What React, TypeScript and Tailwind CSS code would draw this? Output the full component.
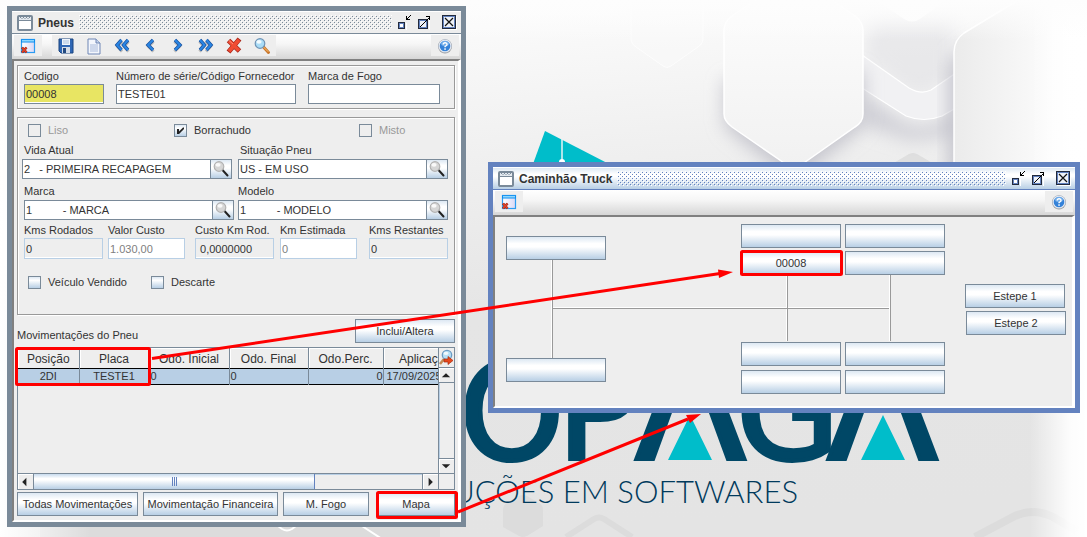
import * as React from "react";
import clsx from "clsx";

const metalButton =
  "border border-[#7a8a99] bg-[linear-gradient(#dde8f3,#ffffff_30%,#ffffff_45%,#b8cfe5)] text-[#333] text-[11px] leading-3 whitespace-nowrap";

function FrameIcon() {
  return (
    <svg width="16" height="16" viewBox="0 0 16 16" className="shrink-0" aria-hidden="true">
      <rect x="1" y="1" width="14" height="14" rx="1" fill="#fff" stroke="#7a8a99" strokeWidth="2" />
      <rect x="2" y="2" width="12" height="3" fill="#e4e9ef" />
      <path d="M3 2.500h1M6 2.500h1M9 2.500h1M12 2.500h1M4.500 3.500h1M7.500 3.500h1M10.500 3.500h1" stroke="#7a8a99" />
      <path d="M2 5.500h12" stroke="#7a8a99" />
    </svg>
  );
}

function Bumps({ id, color }: { id: string; color: string }) {
  return (
    <svg className="h-[15px] min-w-0 flex-1" shapeRendering="crispEdges" aria-hidden="true">
      <defs>
        <pattern id={id} width="4" height="4" patternUnits="userSpaceOnUse">
          <rect x="0" y="0" width="1" height="1" fill="#fff" />
          <rect x="1" y="1" width="1" height="1" fill={color} />
          <rect x="2" y="2" width="1" height="1" fill="#fff" />
          <rect x="3" y="3" width="1" height="1" fill={color} />
        </pattern>
      </defs>
      <rect width="100%" height="100%" fill={`url(#${id})`} />
    </svg>
  );
}

function MinimizeIcon() {
  return (
    <svg width="15" height="15" viewBox="0 0 15 15" shapeRendering="crispEdges" aria-hidden="true">
      <path d="M2 15h7V8" fill="none" stroke="#fff" />
      <rect x="1.500" y="7.500" width="6" height="6" fill="#fff" stroke="#222a3c" />
      <rect x="2.500" y="8.500" width="4" height="4" fill="none" stroke="#6382bf" />
      <path d="M9 1h1v3h3v1H9zM10 3h1v1h-1zM11 2h1v1h-1zM12 1h1v1h-1zM13 0h1v1h-1z" fill="#000" />
    </svg>
  );
}

function MaximizeIcon() {
  return (
    <svg width="15" height="15" viewBox="0 0 15 15" shapeRendering="crispEdges" aria-hidden="true">
      <path d="M2 15h10V5" fill="none" stroke="#fff" />
      <rect x="1.500" y="4.500" width="9" height="9" fill="#eef2f8" stroke="#222a3c" />
      <rect x="2.500" y="5.500" width="7" height="7" fill="none" stroke="#6382bf" />
      <path
        d="M3 11h1v1H3zM4 10h1v1H4zM5 9h1v1H5zM6 8h1v1H6zM7 7h1v1H7zM8 6h1v1H8zM9 5h1v1H9zM10 4h1v1h-1zM11 3h1v1h-1zM9 1h4v4h-1V2H9z"
        fill="#000"
      />
    </svg>
  );
}

function CloseIcon() {
  return (
    <svg width="15" height="15" viewBox="0 0 15 15" aria-hidden="true">
      <rect x="1.500" y="1.500" width="13" height="13" fill="none" stroke="#fff" />
      <rect x=".5" y=".5" width="13" height="13" fill="#eef2f8" stroke="#222a3c" />
      <rect x="1.500" y="1.500" width="11" height="11" fill="none" stroke="#6382bf" />
      <path d="M3 3l8 8M11 3l-8 8" stroke="#111" strokeWidth="1.200" />
    </svg>
  );
}

function ExitIcon() {
  return (
    <svg width="16" height="16" viewBox="0 0 16 16" aria-hidden="true">
      <defs>
        <linearGradient id="exitFill" x1="0" x2="1">
          <stop offset="0" stopColor="#fff" />
          <stop offset="1" stopColor="#d9d8f5" />
        </linearGradient>
      </defs>
      <rect x="1.500" y="1.500" width="13" height="13" fill="url(#exitFill)" stroke="#2b9cf2" strokeWidth="1.200" />
      <path d="M1 3h14" stroke="#0a8cf0" strokeWidth="3" />
      <path d="M2 2.800h12" stroke="#9fe0ff" strokeWidth="1.400" />
      <path d="M2 9.500l4.500 5M6.500 9.500l-4.500 5" stroke="#7c1d10" strokeWidth="2.600" />
      <path d="M2 9.500l4.500 5M6.500 9.500l-4.500 5" stroke="#e0432b" strokeWidth="1.700" />
    </svg>
  );
}

function SaveIcon() {
  return (
    <svg width="18" height="18" viewBox="0 0 18 18" aria-hidden="true">
      <path d="M2 2h14v14H4l-2-2z" fill="#2f67b5" stroke="#1b447f" />
      <rect x="5" y="2" width="8" height="6" fill="#eef4fb" />
      <path d="M6 4h6M6 6h6" stroke="#a9c0dc" />
      <rect x="5" y="10" width="8" height="6" fill="#d5dde8" />
      <rect x="6" y="11" width="3" height="5" fill="#234a80" />
    </svg>
  );
}

function PageIcon() {
  return (
    <svg width="18" height="18" viewBox="0 0 18 18" aria-hidden="true">
      <path d="M3 2h8l4 4v11H3z" fill="#f3f6fc" stroke="#6f86b5" />
      <path d="M11 2v4h4" fill="#c6d3ea" stroke="#6f86b5" />
      <path d="M5 8h8M5 10h8M5 12h8M5 14h8" stroke="#a9badb" />
    </svg>
  );
}

function ChevronsIcon({ double, right }: { double?: boolean; right?: boolean }) {
  const paths = double ? ["M8.500 3L4 8L8.500 13", "M15 3L10.500 8L15 13"] : ["M12 3L7 8L12 13"];

  return (
    <svg width="18" height="18" viewBox="0 0 18 18" aria-hidden="true">
      <g transform={right ? "translate(18 0) scale(-1 1)" : undefined} fill="none">
        {paths.map((d) => (
          <g key={d}>
            <path d={d} stroke="#888" strokeWidth="3" strokeOpacity=".5" transform="translate(.5 1.500)" />
            <path d={d} stroke="#174f9c" strokeWidth="3.400" />
            <path d={d} stroke="#2a86e4" strokeWidth="2" />
          </g>
        ))}
      </g>
    </svg>
  );
}

function DeleteIcon() {
  return (
    <svg width="18" height="18" viewBox="0 0 18 18" aria-hidden="true">
      <path d="M3.500 3.500L14.500 14M14.500 2L3.500 15" stroke="#a8281b" strokeWidth="5" />
      <path d="M4 4L14 13.500M14 2.800L4 14.300" stroke="#f04c33" strokeWidth="3.600" />
      <path d="M4 3.500L8 7" stroke="#ff8f78" />
    </svg>
  );
}

function SearchIcon({ gray }: { gray?: boolean }) {
  return (
    <svg width="18" height="18" viewBox="0 0 18 18" aria-hidden="true">
      <path d="M10.500 10l5 5.500" stroke={gray ? "#222" : "#c9762b"} strokeWidth={gray ? 2 : 3} strokeLinecap="round" />
      {!gray && <path d="M10.500 10l4.500 4.500" stroke="#ffc470" strokeLinecap="round" />}
      <circle cx="7" cy="6.500" r="4.800" fill={gray ? "#d6d6d6" : "#a9dcf6"} stroke={gray ? "#b2b2b2" : "#6f93b5"} strokeWidth="1.200" />
      <ellipse cx="6" cy="4.800" rx="2.600" ry="1.900" fill="#fff" fillOpacity=".85" />
    </svg>
  );
}

function HelpIcon() {
  return (
    <svg width="16" height="16" viewBox="0 0 16 16" aria-hidden="true">
      <circle cx="8" cy="8.500" r="6.900" fill="#9a9a9a" />
      <circle cx="8" cy="8" r="6.600" fill="#e9eef5" stroke="#a9b4c2" strokeWidth=".6" />
      <circle cx="8" cy="8" r="5.300" fill="#3582d8" />
      <ellipse cx="8" cy="5.600" rx="4" ry="2.600" fill="#8cc0f3" fillOpacity=".7" />
      <path d="M6.200 6.600q0-1.800 1.900-1.800t1.900 1.600q0 1-1.900 2v.8" fill="none" stroke="#fff" strokeWidth="1.400" />
      <rect x="7.300" y="10.300" width="1.500" height="1.500" fill="#fff" />
    </svg>
  );
}

function FindColumnIcon() {
  return (
    <svg width="15" height="18" viewBox="0 0 15 18" aria-hidden="true">
      <path d="M5 10l-4 5" stroke="#c58a55" strokeWidth="2.500" />
      <circle cx="8" cy="6" r="4.700" fill="#b6dff5" stroke="#6c9cc4" strokeWidth="1.300" />
      <ellipse cx="7" cy="4.300" rx="2.500" ry="1.600" fill="#fff" fillOpacity=".8" />
      <path d="M5 10h4V7.500l5 4-5 4V13H5z" fill="#e8481c" stroke="#a52b10" strokeWidth=".7" />
    </svg>
  );
}

const arrowPaths = {
  left: "M9 4v9L4.500 8.500z",
  right: "M6 4v9l4.500-4.500z",
  up: "M3 10h9L7.500 5.500z",
  down: "M3 5.500h9L7.500 10z",
};

function ScrollButton({ dir, label, className }: { dir: keyof typeof arrowPaths; label: string; className?: string }) {
  return (
    <button aria-label={label} className={clsx("h-[15px] w-[15px] shrink-0 bg-[#eee] shadow-[inset_1px_1px_0_#fff]", className)}>
      <svg width="14" height="15" viewBox="0 0 15 16" aria-hidden="true">
        <path d={arrowPaths[dir]} fill="#222" />
      </svg>
    </button>
  );
}

const toolbarItems = [
  { label: "Salvar", icon: <SaveIcon /> },
  { label: "Novo", icon: <PageIcon /> },
  { label: "Primeiro", icon: <ChevronsIcon double /> },
  { label: "Anterior", icon: <ChevronsIcon /> },
  { label: "Próximo", icon: <ChevronsIcon right /> },
  { label: "Último", icon: <ChevronsIcon double right /> },
  { label: "Excluir", icon: <DeleteIcon /> },
  { label: "Pesquisar", icon: <SearchIcon /> },
];

function ToolButton({ label, children }: { label: string; children: React.ReactNode }) {
  return (
    <button aria-label={label} className="flex h-[21px] w-7 items-center justify-center bg-[#eee]">
      {children}
    </button>
  );
}

type FrameProps = {
  id: string;
  title: string;
  active?: boolean;
  className?: string;
  tools?: React.ReactNode;
  children: React.ReactNode;
};

function InternalFrame({ id, title, active, className, tools, children }: FrameProps) {
  return (
    <section
      aria-labelledby={`${id}-title`}
      className={clsx("absolute border-[5px] bg-[#eee]", active ? "border-[#6382bf]" : "border-[#7a8a99]", className)}
    >
      <header
        className={clsx(
          "flex h-[23px] items-center gap-[5px] border-t border-b border-t-white px-1 pl-[5px]",
          active ? "border-b-[#6382bf] bg-[linear-gradient(#dde8f3,#ffffff_30%,#ffffff_40%,#b8cfe5)]" : "border-b-[#7a8a99]"
        )}
      >
        <FrameIcon />
        <h2 id={`${id}-title`} className="text-xs font-bold text-[#333]">
          {title}
        </h2>
        <Bumps id={`${id}-bumps`} color={active ? "#6382bf" : "#7a8a99"} />
        <div className="flex items-center gap-[5px]">
          <button aria-label="Minimizar">
            <MinimizeIcon />
          </button>
          <button aria-label="Maximizar">
            <MaximizeIcon />
          </button>
          <button aria-label="Fechar" className="ml-[5px]">
            <CloseIcon />
          </button>
        </div>
      </header>
      <div className="flex h-[25px] gap-[10px] bg-[linear-gradient(#ffffff,#f6f6f6_40%,#d6d6d6)] px-0.5 pt-px">
        <ToolButton label="Sair">
          <ExitIcon />
        </ToolButton>
        <div className="flex">{tools}</div>
        <div className="ml-auto">
          <ToolButton label="Ajuda">
            <HelpIcon />
          </ToolButton>
        </div>
      </div>
      <div className="border-t-2 border-r-[3px] border-b-2 border-l-2 border-t-[#808080] border-r-white border-b-white border-l-[#808080]">
        {children}
      </div>
    </section>
  );
}

function Panel({ className, children }: { className?: string; children: React.ReactNode }) {
  return (
    <div className={clsx("border border-[#999] shadow-[inset_1px_1px_0_#fff,1px_1px_0_#fff]", className)}>{children}</div>
  );
}

type FieldProps = {
  id: string;
  label: string;
  value: string;
  className?: string;
  inputClass?: string;
};

function Field({ id, label, value, className, inputClass = "h-5 border-[#7a8a99] bg-white text-[#333]" }: FieldProps) {
  return (
    <div className={clsx("flex flex-col gap-0.5", className)}>
      <label htmlFor={id} className="leading-3 whitespace-nowrap">
        {label}
      </label>
      <input id={id} defaultValue={value} className={clsx("w-full border px-px shadow-[inset_0_-1px_0_#fff]", inputClass)} />
    </div>
  );
}

function Lookup({ id, label, value, labelClass }: { id: string; label: string; value: string; labelClass?: string }) {
  return (
    <div className="flex w-[210px] flex-col gap-[3px]">
      <label htmlFor={id} className={clsx("leading-3", labelClass)}>
        {label}
      </label>
      <div className="flex">
        <input id={id} defaultValue={value} className="h-5 min-w-0 flex-1 border border-r-0 border-[#7a8a99] bg-white px-px" />
        <button aria-label={`Pesquisar ${label}`} className={clsx(metalButton, "flex h-5 w-[22px] items-center justify-center")}>
          <SearchIcon gray />
        </button>
      </div>
    </div>
  );
}

function Check({ id, label, checked, disabled }: { id: string; label: string; checked?: boolean; disabled?: boolean }) {
  return (
    <div className={clsx("flex items-center gap-[7px] leading-[13px]", disabled && "text-[#999]")}>
      <span className="relative block h-[13px] w-[13px]">
        <input
          id={id}
          type="checkbox"
          defaultChecked={checked}
          disabled={disabled}
          className={clsx(
            "block h-[13px] w-[13px] appearance-none border border-[#7a8a99]",
            disabled ? "bg-[#eee]" : "bg-[linear-gradient(#dde8f3,#ffffff_30%,#b8cfe5)]"
          )}
        />
        {checked && (
          <svg className="pointer-events-none absolute inset-0" width="13" height="13" viewBox="0 0 13 13" aria-hidden="true">
            <path d="M3 5h2v2.500L9 3.500h1V5l-5 5H3z" fill="#222" />
          </svg>
        )}
      </span>
      <label htmlFor={id}>{label}</label>
    </div>
  );
}

const readOnlyInput = "h-[21px] border-[#b8cfe5] bg-[#eee] text-[#333]";
const mutedInput = "h-[21px] border-[#b8cfe5] bg-white text-[#808080]";

const kmFields = [
  { id: "kmsRodados", label: "Kms Rodados", value: "0", className: "w-[79px]", inputClass: readOnlyInput },
  { id: "valorCusto", label: "Valor Custo", value: "1.030,00", className: "w-[77px]", inputClass: mutedInput },
  { id: "custoKm", label: "Custo Km Rod.", value: " 0,0000000", className: "w-[79px]", inputClass: readOnlyInput },
  { id: "kmEstimada", label: "Km Estimada", value: "0", className: "w-[77px]", inputClass: mutedInput },
  { id: "kmsRestantes", label: "Kms Restantes", value: "0", className: "w-[79px]", inputClass: readOnlyInput },
];

const columns = [
  { title: "Posição", value: "2DI", width: "w-[61px]", align: "text-center" },
  { title: "Placa", value: "TESTE1", width: "w-[70px]", align: "text-center" },
  { title: "Odo. Inicial", value: "0", width: "w-[80px]", align: "pl-px text-left" },
  { title: "Odo. Final", value: "0", width: "w-[79px]", align: "pl-px text-left" },
  { title: "Odo.Perc.", value: "0", width: "w-[75px]", align: "text-right" },
  { title: "Aplicação", value: "17/09/2025", width: "w-[84px]", align: "pl-[3px] text-left" },
];

function MovementsTable() {
  return (
    <div className="mt-1 border border-[#7a8a99]">
      <div className="flex">
        <div className="h-[125px] min-w-0 flex-1 overflow-hidden">
          <table className="w-[449px] table-fixed border-collapse">
            <thead>
              <tr className="h-5">
                {columns.map((col) => (
                  <th
                    key={col.title}
                    className={clsx(
                      "border-r border-[#7a8a99] p-0 pt-0.5 text-xs leading-4 font-normal shadow-[inset_1px_1px_0_#fff]",
                      col.width
                    )}
                  >
                    {col.title}
                  </th>
                ))}
              </tr>
            </thead>
            <tbody>
              <tr className="h-4 border-y border-black bg-[#b8cfe5]">
                {columns.map((col) => (
                  <td key={col.title} className={clsx("border-r border-r-[#7a8a99] p-0 leading-[14px]", col.align)}>
                    {col.value}
                  </td>
                ))}
              </tr>
            </tbody>
          </table>
        </div>
        <div className="flex w-4 flex-col border-l border-[#7a8a99]">
          <button aria-label="Localizar coluna" className="h-5 border-b border-[#7a8a99]">
            <FindColumnIcon />
          </button>
          <ScrollButton dir="up" label="Rolar para cima" className="border-b border-[#7a8a99]" />
          <div className="flex-1 border-l border-[#b8cfe5] bg-[#eee]" />
          <ScrollButton dir="down" label="Rolar para baixo" className="border-t border-[#7a8a99]" />
        </div>
      </div>
      <div className="flex h-4 border-t border-[#7a8a99]">
        <ScrollButton dir="left" label="Rolar para a esquerda" />
        <div className="flex flex-1 border-x border-[#7a8a99] shadow-[inset_0_1px_0_#b8cfe5]">
          <div className="flex w-[281px] items-center justify-center gap-px border-r border-[#6382bf] bg-[linear-gradient(#c8dbee,#ffffff_30%,#ffffff_40%,#b8cfe5)]">
            <span className="h-[9px] w-px bg-[#6382bf]" />
            <span className="h-[9px] w-px bg-[#6382bf]" />
            <span className="h-[9px] w-px bg-[#6382bf]" />
          </div>
        </div>
        <ScrollButton dir="right" label="Rolar para a direita" />
        <div className="w-4 border-l border-[#7a8a99]" />
      </div>
    </div>
  );
}

function TiresWindow() {
  return (
    <InternalFrame
      id="pneus"
      title="Pneus"
      className="top-[6px] left-[7px] w-[459px]"
      tools={toolbarItems.map((item) => (
        <ToolButton key={item.label} label={item.label}>
          {item.icon}
        </ToolButton>
      ))}
    >
      <form className="px-[3px] py-1" onSubmit={(e) => e.preventDefault()}>
        <Panel className="flex gap-3 px-1.5 py-1">
          <Field
            id="codigo"
            label="Codigo"
            value="00008"
            className="w-20"
            inputClass="h-5 border-[#7a8a99] bg-[#e8e563] text-[#333]"
          />
          <Field id="serie" label="Número de série/Código Fornecedor" value="TESTE01" className="w-[180px]" />
          <Field id="fogo" label="Marca de Fogo" value="" className="w-[132px]" />
        </Panel>

        <Panel className="mt-2 px-1 pt-1.5 pb-[25px]">
          <div className="grid grid-cols-[146px_185px_1fr] pl-1.5">
            <Check id="liso" label="Liso" disabled />
            <Check id="borrachudo" label="Borrachudo" checked />
            <Check id="misto" label="Misto" disabled />
          </div>
          <div className="mt-[7px] flex gap-1.5">
            <Lookup id="vida" label="Vida Atual" value="2   - PRIMEIRA RECAPAGEM" labelClass="pl-0.5" />
            <Lookup id="situacao" label="Situação Pneu" value="US - EM USO" labelClass="pl-0.5" />
          </div>
          <div className="mt-1.5 flex gap-1 pl-0.5">
            <Lookup id="marca" label="Marca" value="1          - MARCA" />
            <Lookup id="modelo" label="Modelo" value="1          - MODELO" />
          </div>
          <div className="mt-1 grid grid-cols-[84px_87px_85px_89px_79px] pl-0.5">
            {kmFields.map((field) => (
              <Field key={field.id} {...field} />
            ))}
          </div>
          <div className="mt-[17px] grid grid-cols-[123px_1fr] pl-1.5">
            <Check id="vendido" label="Veículo Vendido" />
            <Check id="descarte" label="Descarte" />
          </div>
        </Panel>

        <div className="mt-1 flex justify-between">
          <h3 className="mb-0.5 self-end leading-3">Movimentações do Pneu</h3>
          <button className={clsx(metalButton, "h-6 w-[100px]")}>Inclui/Altera</button>
        </div>
        <MovementsTable />
        <div className="mt-0.5 flex gap-[5px]">
          <button className={clsx(metalButton, "h-6 w-[121px]")}>Todas Movimentações</button>
          <button className={clsx(metalButton, "h-6 w-[135px]")}>Movimentação Financeira</button>
          <button className={clsx(metalButton, "h-6 w-[86px]")}>M. Fogo</button>
          <button className={clsx(metalButton, "ml-auto h-6 w-[78px]")}>Mapa</button>
        </div>
      </form>
    </InternalFrame>
  );
}

const wheels = [
  { id: "1E", code: "", pos: "left-[11px] top-[19px]" },
  { id: "1D", code: "", pos: "left-[11px] top-[141px]" },
  { id: "2EE", code: "", pos: "left-[246px] top-[7px]" },
  { id: "2DI", code: "00008", pos: "left-[246px] top-[34px]" },
  { id: "3EE", code: "", pos: "left-[350px] top-[7px]" },
  { id: "3EI", code: "", pos: "left-[350px] top-[34px]" },
  { id: "2DE", code: "", pos: "left-[246px] top-[125px]" },
  { id: "2EI", code: "", pos: "left-[246px] top-[153px]" },
  { id: "3DI", code: "", pos: "left-[350px] top-[125px]" },
  { id: "3DE", code: "", pos: "left-[350px] top-[153px]" },
  { id: "S1", code: "Estepe 1", pos: "left-[470px] top-[67px]" },
  { id: "S2", code: "Estepe 2", pos: "left-[471px] top-[94px]" },
];

function TruckWindow() {
  return (
    <InternalFrame id="truck" title="Caminhão Truck" active className="top-[162px] left-[488px] w-[592px]">
      <div className="relative h-[189px]">
        <svg className="absolute inset-0 h-full w-full" shapeRendering="crispEdges" aria-hidden="true">
          <path d="M56.500 43v98M58 90.500h336M291.500 59v65M394.500 58v66" stroke="#fff" />
          <path d="M57.500 43v98M58 91.500h336M292.500 59v65M395.500 58v66" stroke="#999" />
        </svg>
        {wheels.map((wheel) => (
          <button key={wheel.id} aria-label={wheel.code || `Roda ${wheel.id}`} className={clsx(metalButton, "absolute h-6 w-[100px]", wheel.pos)}>
            {wheel.code}
          </button>
        ))}
      </div>
    </InternalFrame>
  );
}

function Wallpaper() {
  return (
    <svg className="absolute top-0 left-0" width="1087" height="537" viewBox="0 0 1087 537" aria-hidden="true">
      <defs>
        <linearGradient id="bgFill" x1=".3" y1="0" x2=".45" y2="1">
          <stop offset="0" stopColor="#fdfdfd" />
          <stop offset=".3" stopColor="#f0f0f0" />
          <stop offset=".6" stopColor="#e5e5e5" />
          <stop offset="1" stopColor="#e4e4e4" />
        </linearGradient>
        <linearGradient id="edgeRight">
          <stop offset="0" stopColor="#fff" stopOpacity="0" />
          <stop offset=".7" stopColor="#fff" stopOpacity=".9" />
          <stop offset="1" stopColor="#fff" />
        </linearGradient>
        <linearGradient id="edgeLeft">
          <stop offset="0" stopColor="#fff" />
          <stop offset="1" stopColor="#fff" stopOpacity="0" />
        </linearGradient>
        <linearGradient id="edgeTop" x1="0" y1="0" x2="0" y2="1">
          <stop offset="0" stopColor="#fdfdfd" />
          <stop offset="1" stopColor="#fdfdfd" stopOpacity="0" />
        </linearGradient>
        <linearGradient id="hexFill" x1="0" y1="0" x2="0" y2="1">
          <stop offset="0" stopColor="#fefefe" />
          <stop offset="1" stopColor="#f1f1f1" />
        </linearGradient>
        <linearGradient id="hexSide">
          <stop offset="0" stopColor="#ebebeb" />
          <stop offset=".8" stopColor="#fdfdfd" />
        </linearGradient>
        <filter id="soft" x="-30%" y="-30%" width="160%" height="160%">
          <feGaussianBlur stdDeviation="9" />
        </filter>
      </defs>
      <rect width="1087" height="537" fill="url(#bgFill)" />
      <path d="M893 168q0-5 4-7l12-7q4-2 8 0l12 7q4 2 4 7v40h-40z" fill="#dfdfdf" />
      <path d="M806 168q2 24 14 34" fill="none" stroke="#dedede" strokeWidth="6" />

      <path d="M872 20h82v60l-30 14q-8 3-16-2L862 58z" fill="#dcdcdf" fillOpacity=".5" filter="url(#soft)" />
      <path d="M876 0l28 19q8 5 16 0L946 0z" fill="#fcfcfc" />
      <path d="M862 92l42 30q16 8 34 0l18-12v25l-45 6-49-16z" fill="#b9b9c4" fillOpacity=".6" filter="url(#soft)" />
      <path d="M862 55l47 33q12 7 22 2l25-17v35l-14 8q-18 7-36 0L862 88z" fill="#f1f1f3" stroke="#fff" strokeWidth="1.200" />

      <path d="M724 80v40q0 8 8 13l56 44q6 4 12 0l56-44q8-6 8-14V70z" fill="#b4b4bf" fillOpacity=".7" filter="url(#soft)" />
      <path
        d="M724 30q0-8 8-14l56-38q6-4 12 0l55 38q8 6 8 14v84q0 8-8 13l-54 38q-7 5-14 0l-55-38q-8-6-8-13z"
        fill="url(#hexFill)"
        stroke="#fff"
        strokeWidth="1.500"
      />
      <path d="M631 0v38q0 6 5 9l27 19q4 3 8 0l27-19q5-3 5-9V0" fill="#fafafa" fillOpacity=".5" stroke="#fff" strokeOpacity=".7" />

      <path d="M948 70q0-10 15-20l20-12v170l-20-15q-15-10-15-24z" fill="#b4b4bf" fillOpacity=".7" filter="url(#soft)" />
      <path d="M954 52q0-12 10-19l55-33h68v250l-120-56q-13-9-13-22z" fill="url(#hexSide)" />
      <path d="M1015 2L964 33q-10 7-10 19v120q0 13 13 22" fill="none" stroke="#fff" strokeWidth="1.500" />

      <path d="M503 510q0-5 4-7l12-7q4-2 8 0l12 7q4 2 4 7v16l-16 10q-4 2-8 0l-16-9z" fill="#dcdcdc" />
      <path d="M566 537l28-18q5-3 10 0l28 18" fill="none" stroke="#dcdcdc" strokeWidth="6" />
      <path d="M40 537V520h400v17z" fill="#dcdcdc" />
      <path d="M270 520l12 9q5 3 10 0l12-9M362 526l20 13" fill="none" stroke="#fff" strokeWidth="2" />
      <path d="M975 537l38-20q20-10 40 0l24 14" fill="none" stroke="#dcdcdc" strokeWidth="8" />
      <rect x="1030" width="57" height="537" fill="url(#edgeRight)" />
      <rect width="90" height="537" fill="url(#edgeLeft)" />
      <rect width="1087" height="40" fill="url(#edgeTop)" />

      <path d="M545 131l64 33h-76z" fill="#00bdca" />
      <path d="M562 139v22" stroke="#e9f3f4" strokeWidth="1.500" />
      <circle cx="562" cy="162" r="3" fill="#fff" />

      <text y="459" fontFamily="'DejaVu Sans', sans-serif" fontSize="134" fill="#004766" stroke="#004766" strokeWidth="4">
        <tspan x="459">O</tspan>
        <tspan x="557">P</tspan>
        <tspan x="635" fontSize="162">
          Λ
        </tspan>
        <tspan x="736">G</tspan>
        <tspan x="827" fontSize="162">
          Λ
        </tspan>
      </text>
      <path d="M690 415l22 45h-44zM883 415l22 45h-44z" fill="#00bdca" />
      <text x="798" y="503" textAnchor="end" fontFamily="Lato, sans-serif" fontSize="31" fontWeight="300" fill="#003a5c">
        UÇÕES EM SOFTWARES
      </text>
    </svg>
  );
}

function Annotations() {
  return (
    <svg className="pointer-events-none absolute top-0 left-0" width="1087" height="537" viewBox="0 0 1087 537" aria-hidden="true">
      <g fill="none" stroke="#f00" strokeWidth="3">
        <rect x="16.500" y="348.500" width="133" height="36" rx="1" />
        <rect x="377.500" y="492.500" width="79" height="25" rx="1" />
        <rect x="741.500" y="251.500" width="100" height="23" rx="1" />
        <path d="M152 358.500L720 273.500M458 512L688 419" />
      </g>
      <path d="M733 272l-14 6-1-8.500zM701 414l-11 9-4-8z" fill="#f00" />
    </svg>
  );
}

export default function App() {
  return (
    <main className="relative min-h-screen overflow-hidden bg-[#e6e6e6] font-['Liberation_Sans',Arial,sans-serif] text-[11px] text-[#333]">
      <Wallpaper />
      <TiresWindow />
      <TruckWindow />
      <Annotations />
    </main>
  );
}
